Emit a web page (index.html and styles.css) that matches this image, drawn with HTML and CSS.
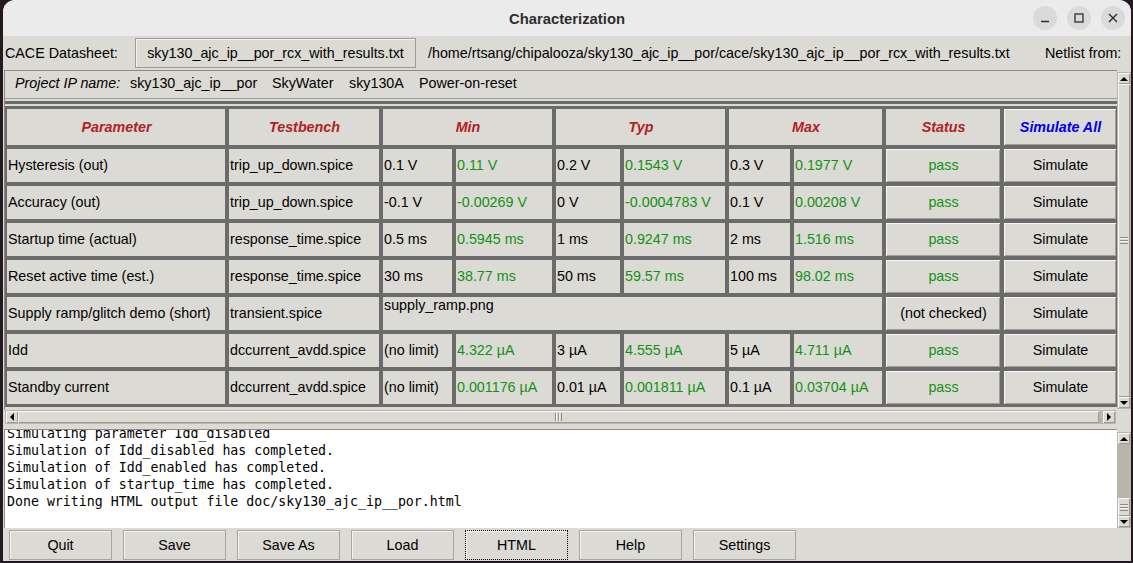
FILE: index.html
```html
<!DOCTYPE html>
<html>
<head>
<meta charset="utf-8">
<link rel="stylesheet" href="styles.css">
</head>
<body>
<div class="window">
  <div class="titlebar">
    <div class="title">Characterization</div>
    <div class="wm">
      <div class="wm-btn"><svg width="10" height="10" viewBox="0 0 10 10"><path d="M1 8.5h8" stroke="#2e2e2e" stroke-width="1.4"/></svg></div>
      <div class="wm-btn"><svg width="10" height="10" viewBox="0 0 10 10"><rect x="1" y="1" width="8" height="8" fill="none" stroke="#2e2e2e" stroke-width="1.3"/></svg></div>
      <div class="wm-btn"><svg width="10" height="10" viewBox="0 0 10 10"><path d="M1 1L9 9M9 1L1 9" stroke="#2e2e2e" stroke-width="1.4"/></svg></div>
    </div>
  </div>

  <div class="toolbar">
    <span class="lbl">CACE Datasheet:</span>
    <div class="tbtn">sky130_ajc_ip__por_rcx_with_results.txt</div>
    <span class="path">/home/rtsang/chipalooza/sky130_ajc_ip__por/cace/sky130_ajc_ip__por_rcx_with_results.txt</span>
    <span class="lbl">Netlist from:</span>
  </div>

  <div class="tablepane">
    <div class="tableview">
      <div class="project">
        <span class="proj-label">Project IP name:</span>
        <span>sky130_ajc_ip__por</span>
        <span>SkyWater</span>
        <span>sky130A</span>
        <span>Power-on-reset</span>
      </div>
      <div class="sep"></div>
      <div class="grid">
        <div class="c hd">Parameter</div>
        <div class="c hd">Testbench</div>
        <div class="c hd span2">Min</div>
        <div class="c hd span2">Typ</div>
        <div class="c hd span2">Max</div>
        <div class="c hd">Status</div>
        <div class="c hd btn simall">Simulate All</div>

        <div class="c">Hysteresis (out)</div>
        <div class="c">trip_up_down.spice</div>
        <div class="c">0.1 V</div>
        <div class="c val">0.11 V</div>
        <div class="c">0.2 V</div>
        <div class="c val">0.1543 V</div>
        <div class="c">0.3 V</div>
        <div class="c val">0.1977 V</div>
        <div class="c btn pass">pass</div>
        <div class="c btn">Simulate</div>

        <div class="c">Accuracy (out)</div>
        <div class="c">trip_up_down.spice</div>
        <div class="c">-0.1 V</div>
        <div class="c val">-0.00269 V</div>
        <div class="c">0 V</div>
        <div class="c val">-0.0004783 V</div>
        <div class="c">0.1 V</div>
        <div class="c val">0.00208 V</div>
        <div class="c btn pass">pass</div>
        <div class="c btn">Simulate</div>

        <div class="c">Startup time (actual)</div>
        <div class="c">response_time.spice</div>
        <div class="c">0.5 ms</div>
        <div class="c val">0.5945 ms</div>
        <div class="c">1 ms</div>
        <div class="c val">0.9247 ms</div>
        <div class="c">2 ms</div>
        <div class="c val">1.516 ms</div>
        <div class="c btn pass">pass</div>
        <div class="c btn">Simulate</div>

        <div class="c">Reset active time (est.)</div>
        <div class="c">response_time.spice</div>
        <div class="c">30 ms</div>
        <div class="c val">38.77 ms</div>
        <div class="c">50 ms</div>
        <div class="c val">59.57 ms</div>
        <div class="c">100 ms</div>
        <div class="c val">98.02 ms</div>
        <div class="c btn pass">pass</div>
        <div class="c btn">Simulate</div>

        <div class="c">Supply ramp/glitch demo (short)</div>
        <div class="c">transient.spice</div>
        <div class="c span6 top">supply_ramp.png</div>
        <div class="c btn">(not checked)</div>
        <div class="c btn">Simulate</div>

        <div class="c">Idd</div>
        <div class="c">dccurrent_avdd.spice</div>
        <div class="c">(no limit)</div>
        <div class="c val">4.322 µA</div>
        <div class="c">3 µA</div>
        <div class="c val">4.555 µA</div>
        <div class="c">5 µA</div>
        <div class="c val">4.711 µA</div>
        <div class="c btn pass">pass</div>
        <div class="c btn">Simulate</div>

        <div class="c">Standby current</div>
        <div class="c">dccurrent_avdd.spice</div>
        <div class="c">(no limit)</div>
        <div class="c val">0.001176 µA</div>
        <div class="c">0.01 µA</div>
        <div class="c val">0.001811 µA</div>
        <div class="c">0.1 µA</div>
        <div class="c val">0.03704 µA</div>
        <div class="c btn pass">pass</div>
        <div class="c btn">Simulate</div>
      </div>
    </div>
    <div class="vscroll tv">
      <div class="arrow"><span class="tri up"></span></div>
      <div class="thumb"><span class="grip-h"></span></div>
      <div class="arrow"><span class="tri down"></span></div>
    </div>
  </div>

  <div class="hrow">
    <div class="hscroll">
      <div class="arrow h"><span class="tri left"></span></div>
      <div class="thumb hthumb"><span class="grip-v"></span></div>
      <div class="trough-end"></div>
      <div class="arrow h"><span class="tri right"></span></div>
    </div>
  </div>

  <div class="logpane">
    <div class="log">
      <pre class="logtext">Simulating parameter Idd_disabled
Simulation of Idd_disabled has completed.
Simulation of Idd_enabled has completed.
Simulation of startup_time has completed.
Done writing HTML output file doc/sky130_ajc_ip__por.html</pre>
    </div>
    <div class="vscroll lv">
      <div class="arrow"><span class="tri up"></span></div>
      <div class="trough"></div>
      <div class="thumb small"><span class="grip-h"></span></div>
      <div class="arrow"><span class="tri down"></span></div>
    </div>
  </div>

  <div class="buttons">
    <div class="bbtn">Quit</div>
    <div class="bbtn">Save</div>
    <div class="bbtn">Save As</div>
    <div class="bbtn">Load</div>
    <div class="bbtn focus">HTML</div>
    <div class="bbtn">Help</div>
    <div class="bbtn">Settings</div>
  </div>
</div>
</body>
</html>
```

FILE: styles.css
```css
* { box-sizing: border-box; }

body {
  margin: 0;
  width: 1133px;
  height: 563px;
  overflow: hidden;
  background: #221a20;
  font-family: "Liberation Sans", Arial, sans-serif;
  font-size: 14.3px;
  color: #000;
}

.window {
  margin-left: 3px;
  width: 1128px;
  height: 561px;
  background: #dcdad5;
  border-radius: 12px 12px 0 0;
  overflow: hidden;
}

/* title bar */
.titlebar {
  height: 36px;
  background: #ebebeb;
  display: grid;
  grid-template-columns: 1fr auto 1fr;
  align-items: center;
}
.title {
  grid-column: 2;
  font-weight: bold;
  font-size: 14.8px;
  color: #2e2e2e;
  padding-top: 2px;
}
.wm {
  grid-column: 3;
  justify-self: end;
  display: flex;
  gap: 10px;
  margin-right: 6px;
}
.wm-btn {
  width: 24px;
  height: 24px;
  border-radius: 50%;
  background: #dadada;
  display: flex;
  align-items: center;
  justify-content: center;
}

/* toolbar */
.toolbar {
  height: 34px;
  display: grid;
  grid-template-columns: 130px 281px 629px 1fr;
  align-items: center;
  padding-left: 2px;
  white-space: nowrap;
}
.tbtn {
  height: 30px;
  display: flex;
  align-items: center;
  justify-content: center;
  background: #dcdad5;
  border: 1px solid #9e9a91;
  box-shadow: inset 1px 1px 0 #f4f3f1;
}
.path { padding-left: 12px; }

/* table pane */
.tablepane {
  height: 340px;
  display: flex;
  padding-left: 1px;
}
.tableview {
  width: 1113px;
  border-top: 1px solid #8a8a8a;
  border-left: 1px solid #8a8a8a;
}
.project {
  height: 28px;
  border-bottom: 1px solid #9a9a9a;
  display: grid;
  grid-template-columns: 115px 142px 77px 70px auto;
  align-items: center;
  padding: 0 0 3px 10px;
  white-space: nowrap;
}
.proj-label { font-style: italic; }
.sep {
  margin-top: 2px;
  height: 5px;
  border-top: 3px solid #6b6b6b;
}
.grid {
  display: grid;
  grid-template-columns: 218px 150px 69px 96px 64px 101px 61px 88px 114px 112px;
  grid-template-rows: 36px repeat(7, 33px);
  gap: 4px;
  padding: 3px 1px 3px 2px;
  background: #6b6b6b;
}
.c {
  background: #dcdad5;
  display: flex;
  align-items: center;
  padding: 0 0 1px 1px;
  white-space: nowrap;
  overflow: hidden;
}
.hd {
  justify-content: center;
  font-weight: bold;
  font-style: italic;
  color: #b22222;
  padding-bottom: 0;
}
.span2 { grid-column: span 2; }
.span6 { grid-column: span 6; }
.top { align-items: flex-start; }
.val { color: #129212; }
.btn {
  justify-content: center;
  box-shadow: inset 1px 1px 0 #f7f6f4, inset -1px -1px 0 #a29e96;
}
.pass { color: #129212; }
.simall { color: #0000f0; }

/* scrollbars */
.vscroll {
  width: 14px;
  background: #bab5ab;
  display: flex;
  flex-direction: column;
  padding: 1px;
}
.tv { margin: 2px 0 1px 0; }
.arrow {
  height: 11px;
  flex: none;
  background: #dcdad5;
  box-shadow: inset 1px 1px 0 #f7f6f4, inset -1px -1px 0 #9e9a91;
  display: flex;
  align-items: center;
  justify-content: center;
}
.arrow.h { height: auto; width: 12px; }
.thumb {
  flex: 1;
  background: #dcdad5;
  box-shadow: inset 1px 1px 0 #f7f6f4, inset -1px -1px 0 #9e9a91;
  display: flex;
  align-items: center;
  justify-content: center;
}
.thumb.small { flex: none; height: 18px; }
.trough { flex: 1; }
.tri { width: 0; height: 0; }
.tri.up { border-left: 4px solid transparent; border-right: 4px solid transparent; border-bottom: 4px solid #000; }
.tri.down { border-left: 4px solid transparent; border-right: 4px solid transparent; border-top: 4px solid #000; }
.tri.left { border-top: 4px solid transparent; border-bottom: 4px solid transparent; border-right: 4px solid #000; }
.tri.right { border-top: 4px solid transparent; border-bottom: 4px solid transparent; border-left: 4px solid #000; }
.grip-h {
  width: 8px;
  height: 7px;
  background: repeating-linear-gradient(to bottom, #8f8b83 0 1px, #f4f3f1 1px 2px, transparent 2px 3px);
}
.grip-v {
  width: 7px;
  height: 8px;
  background: repeating-linear-gradient(to right, #8f8b83 0 1px, #f4f3f1 1px 2px, transparent 2px 3px);
}

.hrow {
  height: 14px;
  padding-left: 2px;
}
.hscroll {
  width: 1111px;
  height: 14px;
  display: flex;
  background: #bab5ab;
  padding: 1px;
}
.hthumb { flex: none; width: 1081px; }
.trough-end { flex: 1; }

/* log */
.logpane {
  height: 105px;
  padding-top: 5px;
  padding-left: 1px;
  display: flex;
}
.log {
  width: 1113px;
  height: 99px;
  background: #fff;
  border-top: 1px solid #8d8d8d;
  border-left: 1px solid #8d8d8d;
  overflow: hidden;
  padding-left: 2px;
}
.logtext {
  margin: -5px 0 0 0;
  font-family: "DejaVu Sans Mono", monospace;
  font-size: 13.25px;
  line-height: 17px;
}
.lv { height: 96px; margin-top: 3px; }

/* bottom buttons */
.buttons {
  height: 32px;
  display: flex;
  gap: 11px;
  padding: 1px 0 0 6px;
}
.bbtn {
  width: 103px;
  height: 30px;
  display: flex;
  align-items: center;
  justify-content: center;
  background: #dcdad5;
  border: 1px solid #a9a59c;
  box-shadow: inset 1px 1px 0 #f4f3f1;
  padding-bottom: 1px;
}
.bbtn.focus { border: 1px dotted #000; }
```
